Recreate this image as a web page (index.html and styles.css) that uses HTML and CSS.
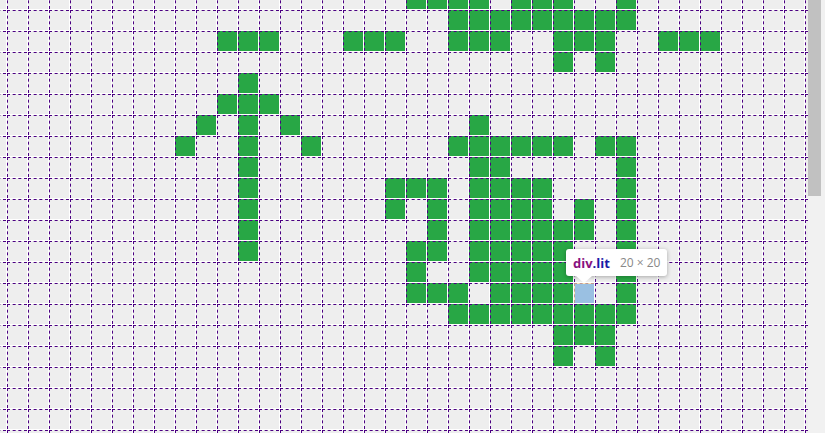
FILE: index.html
```html
<!DOCTYPE html>
<html lang="en">
<head>
<meta charset="utf-8">
<title>Grid</title>
<link rel="stylesheet" href="styles.css">
</head>
<body>
<div class="page">
  <div class="scroller">
    <div class="grid" id="grid"></div>
  </div>
  <div class="vbar"><div class="thumb"></div></div>
</div>
<template id="overlay">
  <div class="hl"></div>
  <div class="tip"><span class="tag">div</span><span class="cls">.lit</span><span class="dim">20 × 20</span></div>
</template>
<script src="script.js"></script>
</body>
</html>
```
FILE: styles.css
```css
html, body { margin: 0; height: 100%; overflow: hidden; background: #fff; }
.page {
  display: flex;
  height: 100vh;
}
.scroller {
  flex: 1;
  min-width: 0;
  overflow: hidden;
}
.vbar {
  width: 17px;
  flex: none;
  background: #f1f1f1;
  display: flex;
  flex-direction: column;
}
.thumb {
  height: 196px;
  width: 13px;
  background: #c1c1c1;
}
.grid {
  display: grid;
  grid-template-columns: repeat(40, 20px);
  grid-auto-rows: 20px;
  gap: 1px;
  width: max-content;
  margin: -11px 0 0 -14px;
}
.cell {
  box-sizing: border-box;
  background: #eeeeee;
  border-top: 1px dashed #4b0082;
  border-left: 1px dashed #4b0082;
}
.cell.on { background: #28a745; }
.cell.lit { position: relative; }
.hl {
  position: absolute;
  top: -1px; left: -1px; right: 0; bottom: 0;
  border-top: 1px solid rgba(255, 229, 153, 0.66);
  border-left: 1px solid rgba(255, 229, 153, 0.66);
  background: rgba(111, 168, 220, 0.66);
  background-clip: padding-box;
}
.tip {
  position: absolute;
  top: -35px; left: -9px;
  height: 27px;
  box-sizing: border-box;
  padding: 0 7px;
  display: flex;
  align-items: center;
  background: #fff;
  border-radius: 3px;
  box-shadow: 0 1px 4px rgba(0, 0, 0, 0.3);
  font-family: "Open Sans", "Noto Sans", sans-serif;
  white-space: nowrap;
  z-index: 2;
}
.tip::after {
  content: "";
  position: absolute;
  top: 100%; left: 10px;
  border-left: 8px solid transparent;
  border-right: 8px solid transparent;
  border-top: 7px solid #fff;
}
.tag { color: #881280; font-weight: 700; font-size: 13px; }
.cls { color: #1a1aa6; font-weight: 700; font-size: 13px; }
.dim { color: #888; margin-left: 10px; font-size: 12px; }
```
FILE: script.js
```js
var G = {
  "-1": [19,20,21,22,24,25,26,29],
  "0": [21,22,23,24,25,26,27,28,29],
  "1": [10,11,12,16,17,18,21,22,23,26,27,28,31,32,33],
  "2": [26,28],
  "3": [11],
  "4": [10,11,12],
  "5": [9,11,13,22],
  "6": [8,11,14,21,22,23,24,25,26,28,29],
  "7": [11,22,23,29],
  "8": [11,18,19,20,22,23,24,25,29],
  "9": [11,18,20,22,23,24,25,27,29],
  "10": [11,20,22,23,24,25,26,27,29],
  "11": [11,19,20,22,23,24,25,26,29],
  "12": [19,22,23,24,25,26,29],
  "13": [19,20,21,23,24,25,26,29],
  "14": [21,22,23,24,25,26,27,28,29],
  "15": [26,27,28],
  "16": [26,28]
};
var grid = document.getElementById('grid');
var tpl = document.getElementById('overlay');
for (var ri = 0; ri < 22; ri++) {
  var r = ri - 1;
  var on = G[String(r)] || [];
  for (var ci = 0; ci < 40; ci++) {
    var c = ci - 1;
    var d = document.createElement('div');
    d.className = 'cell' + (on.indexOf(c) >= 0 ? ' on' : '');
    if (r === 13 && c === 27) {
      d.className = 'cell lit';
      d.appendChild(tpl.content.cloneNode(true));
    }
    grid.appendChild(d);
  }
}
```
